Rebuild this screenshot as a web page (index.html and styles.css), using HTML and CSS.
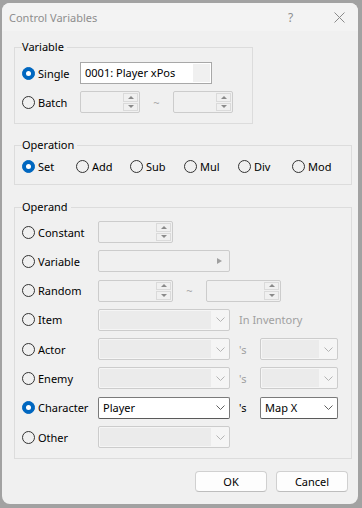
FILE: index.html
```html
<!doctype html>
<html lang="en">
<head>
    <meta charset="utf-8" />
    <title>Control Variables</title>
    <link rel="stylesheet" href="styles.css">
</head>
<body>
    <div class="window">
        <!-- Title bar -->
        <div class="titlebar">
            <span class="title">Control Variables</span>
            <span class="help">?</span>
            <svg class="close" width="11" height="11" viewBox="0 0 11 11">
                <path d="M0.5 0.5 L10.5 10.5 M10.5 0.5 L0.5 10.5" stroke="#8a8a8a" stroke-width="1" fill="none" />
            </svg>
        </div>

        <div class="content">
            <!-- Variable -->
            <fieldset class="group group-variable">
                <legend>Variable</legend>
                <div class="rows">
                    <div class="row">
                        <label class="opt opt-var"><span class="radio on"></span>Single</label>
                        <div class="textbox">
                            <span class="tb-text">0001: Player xPos</span>
                            <span class="tb-btn"></span>
                        </div>
                    </div>
                    <div class="row">
                        <label class="opt opt-var"><span class="radio"></span>Batch</label>
                        <div class="spin spin-var"><span class="spin-field"></span><span class="spin-btns"><span class="up"></span><span class="down"></span></span></div>
                        <span class="tilde">~</span>
                        <div class="spin spin-var"><span class="spin-field"></span><span class="spin-btns"><span class="up"></span><span class="down"></span></span></div>
                    </div>
                </div>
            </fieldset>

            <!-- Operation -->
            <fieldset class="group group-operation">
                <legend>Operation</legend>
                <div class="ops">
                    <label class="op"><span class="radio on"></span>Set</label>
                    <label class="op"><span class="radio"></span>Add</label>
                    <label class="op"><span class="radio"></span>Sub</label>
                    <label class="op"><span class="radio"></span>Mul</label>
                    <label class="op"><span class="radio"></span>Div</label>
                    <label class="op"><span class="radio"></span>Mod</label>
                </div>
            </fieldset>

            <!-- Operand -->
            <fieldset class="group group-operand">
                <legend>Operand</legend>
                <div class="rows rows-operand">
                    <div class="row">
                        <label class="opt"><span class="radio"></span>Constant</label>
                        <div class="spin"><span class="spin-field"></span><span class="spin-btns"><span class="up"></span><span class="down"></span></span></div>
                    </div>
                    <div class="row">
                        <label class="opt"><span class="radio"></span>Variable</label>
                        <div class="picker"><span class="arrow"></span></div>
                    </div>
                    <div class="row">
                        <label class="opt"><span class="radio"></span>Random</label>
                        <div class="spin"><span class="spin-field"></span><span class="spin-btns"><span class="up"></span><span class="down"></span></span></div>
                        <span class="tilde">~</span>
                        <div class="spin"><span class="spin-field"></span><span class="spin-btns"><span class="up"></span><span class="down"></span></span></div>
                    </div>
                    <div class="row">
                        <label class="opt"><span class="radio"></span>Item</label>
                        <div class="combo"><span class="combo-text"></span><span class="combo-btn"><svg width="9" height="5" viewBox="0 0 9 5"><path d="M0.5 0.5 L4.5 4.5 L8.5 0.5" /></svg></span></div>
                        <span class="suffix disabled">In Inventory</span>
                    </div>
                    <div class="row">
                        <label class="opt"><span class="radio"></span>Actor</label>
                        <div class="combo"><span class="combo-text"></span><span class="combo-btn"><svg width="9" height="5" viewBox="0 0 9 5"><path d="M0.5 0.5 L4.5 4.5 L8.5 0.5" /></svg></span></div>
                        <span class="suffix disabled">'s</span>
                        <div class="combo combo-small"><span class="combo-text"></span><span class="combo-btn"><svg width="9" height="5" viewBox="0 0 9 5"><path d="M0.5 0.5 L4.5 4.5 L8.5 0.5" /></svg></span></div>
                    </div>
                    <div class="row">
                        <label class="opt"><span class="radio"></span>Enemy</label>
                        <div class="combo"><span class="combo-text"></span><span class="combo-btn"><svg width="9" height="5" viewBox="0 0 9 5"><path d="M0.5 0.5 L4.5 4.5 L8.5 0.5" /></svg></span></div>
                        <span class="suffix disabled">'s</span>
                        <div class="combo combo-small"><span class="combo-text"></span><span class="combo-btn"><svg width="9" height="5" viewBox="0 0 9 5"><path d="M0.5 0.5 L4.5 4.5 L8.5 0.5" /></svg></span></div>
                    </div>
                    <div class="row">
                        <label class="opt"><span class="radio on"></span>Character</label>
                        <div class="combo active"><span class="combo-text">Player</span><span class="combo-btn"><svg width="9" height="5" viewBox="0 0 9 5"><path d="M0.5 0.5 L4.5 4.5 L8.5 0.5" /></svg></span></div>
                        <span class="suffix">'s</span>
                        <div class="combo combo-small active"><span class="combo-text">Map X</span><span class="combo-btn"><svg width="9" height="5" viewBox="0 0 9 5"><path d="M0.5 0.5 L4.5 4.5 L8.5 0.5" /></svg></span></div>
                    </div>
                    <div class="row">
                        <label class="opt"><span class="radio"></span>Other</label>
                        <div class="combo"><span class="combo-text"></span><span class="combo-btn"><svg width="9" height="5" viewBox="0 0 9 5"><path d="M0.5 0.5 L4.5 4.5 L8.5 0.5" /></svg></span></div>
                    </div>
                </div>
            </fieldset>

            <!-- Buttons -->
            <div class="buttons">
                <button class="btn">OK</button>
                <button class="btn">Cancel</button>
            </div>
        </div>
    </div>
</body>
</html>
```

FILE: styles.css
```css
body {
    margin: 0;
    background: #a2a2a2;
    font-family: "Noto Sans", "Open Sans", sans-serif;
    font-size: 11px;
    line-height: 15px;
    color: #000;
}
.window {
    box-sizing: border-box;
    width: 356px;
    height: 501px;
    margin: 3px 0 0 2px;
    background: #f0f0f0;
    border-radius: 8px;
    overflow: hidden;
}
.titlebar {
    display: flex;
    align-items: center;
    height: 28px;
    padding: 0 0 0 7px;
    background: #f3f3f3;
}
.title {
    flex: 1;
    font-size: 11px;
    color: #8e8e8e;
}
.help {
    width: 14px;
    margin-right: 32px;
    font-size: 12px;
    color: #8e8e8e;
}
.close {
    margin-right: 13px;
}
.content {
    padding: 8px 10px 0 12px;
}

/* Group boxes */
.group {
    box-sizing: border-box;
    margin: 0;
    padding: 7px 0 10px 7px;
    border: 1px solid #dcdcdc;
    min-width: 0;
}
.group legend {
    padding: 0 3px 0 0;
    line-height: 16px;
    color: #000;
}
.group-variable {
    width: 239px;
}
.group-operation {
    width: 338px;
    margin-top: 13px;
    padding-top: 6px;
}
.group-operand {
    width: 338px;
    margin-top: 14px;
    padding-top: 6px;
}
.rows {
    display: flex;
    flex-direction: column;
    gap: 7px;
}
.rows-operand {
    gap: 7.3px;
}
.row {
    display: flex;
    align-items: center;
    height: 22px;
}

/* Radio buttons */
.opt, .op {
    display: flex;
    align-items: center;
    gap: 3px;
}
.opt {
    width: 76px;
    flex: none;
}
.opt-var {
    width: 58px;
}
.radio {
    box-sizing: border-box;
    display: flex;
    align-items: center;
    justify-content: center;
    width: 13px;
    height: 13px;
    border: 1px solid #333;
    border-radius: 50%;
    flex: none;
}
.radio.on {
    background: #0067c0;
    border-color: #0067c0;
}
.radio.on::after {
    content: "";
    width: 5px;
    height: 5px;
    border-radius: 50%;
    background: #fff;
}
.ops {
    display: grid;
    grid-template-columns: repeat(6, 54px);
    height: 15px;
}

/* Text box */
.textbox {
    box-sizing: border-box;
    display: flex;
    width: 132px;
    height: 22px;
    padding: 1px;
    border: 1px solid #a8a8a8;
    background: #fff;
}
.tb-text {
    flex: 1;
    padding-left: 3px;
    line-height: 18px;
}
.tb-btn {
    width: 17px;
    background: #f0f0f0;
}

/* Spin boxes */
.spin {
    box-sizing: border-box;
    display: flex;
    width: 75px;
    height: 22px;
    padding: 1px;
    border: 1px solid #cccccc;
    border-radius: 2px;
    background: #f0f0f0;
}
.spin-var {
    width: 60px;
}
.spin-field {
    flex: 1;
}
.spin-btns {
    display: flex;
    flex-direction: column;
    gap: 1px;
    width: 15px;
}
.spin-btns span {
    box-sizing: border-box;
    flex: 1;
    display: flex;
    align-items: center;
    justify-content: center;
    border: 1px solid #dadada;
    background: #f0f0f0;
}
.spin-btns .up::after {
    content: "";
    border-left: 3px solid transparent;
    border-right: 3px solid transparent;
    border-bottom: 3px solid #8a8a8a;
}
.spin-btns .down::after {
    content: "";
    border-left: 3px solid transparent;
    border-right: 3px solid transparent;
    border-top: 3px solid #8a8a8a;
}
.tilde {
    width: 33px;
    flex: none;
    text-align: center;
    color: #a8a8a8;
}

/* Variable picker */
.picker {
    box-sizing: border-box;
    display: flex;
    align-items: center;
    justify-content: flex-end;
    width: 132px;
    height: 22px;
    padding-right: 7px;
    border: 1px solid #cccccc;
    border-radius: 2px;
    background: #f0f0f0;
}
.arrow {
    border-top: 3px solid transparent;
    border-bottom: 3px solid transparent;
    border-left: 5px solid #a0a0a0;
}

/* Combo boxes */
.combo {
    box-sizing: border-box;
    display: flex;
    width: 132px;
    height: 22px;
    padding: 1px 0 1px 1px;
    border: 1px solid #cccccc;
    border-radius: 2px;
    background: #f5f5f5;
}
.combo-small {
    width: 78px;
}
.combo-text {
    flex: 1;
    padding-left: 3px;
    line-height: 18px;
    background: #ebebeb;
}
.combo-btn {
    display: flex;
    align-items: center;
    justify-content: center;
    width: 18px;
}
.combo-btn path {
    fill: none;
    stroke: #b4b4b4;
    stroke-width: 1;
}
.combo.active {
    border-color: #7a7a7a;
    border-bottom-color: #5a5a5a;
    background: #fff;
}
.combo.active .combo-text {
    background: #fff;
}
.combo.active .combo-btn path {
    stroke: #606060;
}
.suffix {
    width: 30px;
    flex: none;
    padding-left: 9px;
    box-sizing: border-box;
    white-space: nowrap;
}
.suffix.disabled {
    color: #a0a0a0;
}

/* Dialog buttons */
.buttons {
    display: flex;
    justify-content: flex-end;
    gap: 9px;
    margin-top: 12px;
}
.btn {
    box-sizing: border-box;
    width: 72px;
    height: 21px;
    padding: 0;
    border: 1px solid #d0d0d0;
    border-bottom-color: #bdbdbd;
    border-radius: 4px;
    background: #fdfdfd;
    font: inherit;
    color: #000;
}
```
